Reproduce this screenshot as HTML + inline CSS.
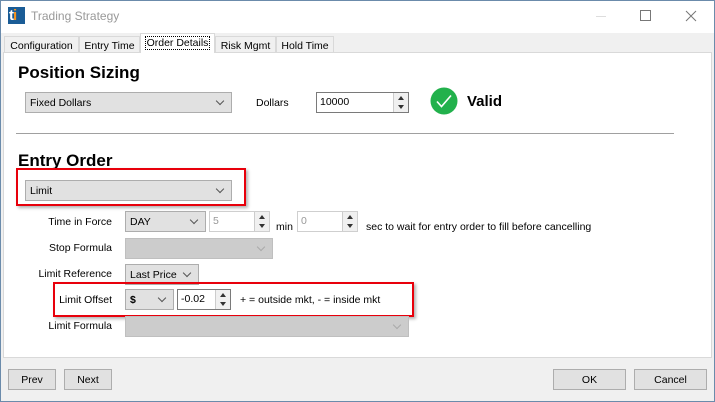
<!DOCTYPE html><html><head><style>
*{box-sizing:border-box;margin:0;padding:0}
body{width:715px;height:402px;overflow:hidden;background:#f0f0f0;font-family:"Liberation Sans",sans-serif;font-size:10.5px;color:#000;position:relative}
.a{position:absolute}
.win{left:0;top:0;width:715px;height:402px;border:1px solid #6b8bab}
.combo{position:absolute;background:#e1e1e1;border:1px solid #adadad;padding:4px 0 0 4px;font-size:10.5px}
.combo:after{content:"";position:absolute;right:8px;top:5px;width:5px;height:5px;border-right:1px solid #555;border-bottom:1px solid #555;transform:rotate(45deg)}
.dis{background:#cccccc;border-color:#bfbfbf}
.dis:after{border-color:#aaa}
.spin{position:absolute;background:#fff;border:1px solid #7a7a7a;padding:3px 0 0 3px;font-size:10.5px}
.spin.d{border-color:#cfcfcf;color:#999}
.spin i{position:absolute;right:0;top:0;width:15px;height:100%;border-left:1px solid #ccc;background:#f0f0f0}
.spin i:before{content:"";position:absolute;left:4px;top:3px;border:3px solid transparent;border-bottom:4px solid #333;border-top:0}
.spin i:after{content:"";position:absolute;left:4px;bottom:3px;border:3px solid transparent;border-top:4px solid #333;border-bottom:0}
.lbl{position:absolute;text-align:right;width:112px;left:0}
.tab{position:absolute;top:36px;height:17px;border:1px solid #d9d9d9;background:#f0f0f0;padding:3px 0 0 0;text-align:center;font-size:10.5px;white-space:nowrap}
.btn{position:absolute;top:369px;height:21px;background:#e1e1e1;border:1px solid #adadad;text-align:center;padding-top:4px;font-size:10.5px}
.red{position:absolute;border:2px solid #e8000b;box-shadow:2px 2px 3px rgba(0,0,0,.3)}
h1{position:absolute;font-size:17px;font-weight:bold;left:18px}
</style></head><body>
<div class="a" style="left:0;top:0;width:715px;height:33px;background:#fff"></div>
<div class="a" style="left:8px;top:7px;width:17px;height:17px;background:#1a5c96;color:#fff;font-weight:bold;font-size:15px;line-height:17px;padding-left:1px;letter-spacing:-1px">t<span style="color:#f7941d">i</span></div>
<div class="a" style="left:31px;top:9px;font-size:12px;color:#999">Trading Strategy</div>
<div class="a" style="left:596px;top:16px;width:10px;height:1px;background:#ddd"></div>
<div class="a" style="left:640px;top:10px;width:11px;height:11px;border:1px solid #777"></div>
<svg class="a" style="left:685px;top:10px" width="12" height="12"><path d="M1 1L11 11M11 1L1 11" stroke="#777" stroke-width="1"/></svg>
<div class="a" style="left:3px;top:52px;width:709px;height:306px;background:#fff;border:1px solid #d9d9d9"></div>
<div class="tab" style="left:4px;width:75px">Configuration</div>
<div class="tab" style="left:79px;width:61px">Entry Time</div>
<div class="tab" style="left:140px;top:33px;height:20px;width:75px;background:#fff;border-bottom:none"><span style="border:1px dotted #000;padding:0 1px">Order Details</span></div>
<div class="tab" style="left:215px;width:61px">Risk Mgmt</div>
<div class="tab" style="left:276px;width:58px">Hold Time</div>
<h1 style="top:63px">Position Sizing</h1>
<div class="combo" style="left:25px;top:92px;width:207px;height:21px">Fixed Dollars</div>
<div class="a" style="left:256px;top:97px">Dollars</div>
<div class="spin" style="left:316px;top:92px;width:93px;height:21px">10000<i></i></div>
<svg class="a" style="left:430px;top:87px" width="28" height="28"><circle cx="14" cy="14" r="13.5" fill="#22b14c"/><path d="M7 14.5l4.5 5 9.5-11" stroke="#fff" stroke-width="1.6" fill="none"/></svg>
<div class="a" style="left:467px;top:93px;font-size:15px;font-weight:bold">Valid</div>
<div class="a" style="left:16px;top:133px;width:658px;height:1px;background:#a0a0a0"></div>
<h1 style="top:151px">Entry Order</h1>
<div class="red" style="left:16px;top:168px;width:230px;height:38px"></div>
<div class="combo" style="left:25px;top:180px;width:207px;height:21px">Limit</div>
<div class="lbl" style="top:216px">Time in Force</div>
<div class="combo" style="left:125px;top:211px;width:81px;height:21px">DAY</div>
<div class="spin d" style="left:209px;top:211px;width:61px;height:21px">5<i></i></div>
<div class="a" style="left:276px;top:221px">min</div>
<div class="spin d" style="left:297px;top:211px;width:61px;height:21px">0<i></i></div>
<div class="a" style="left:366px;top:221px">sec to wait for entry order to fill before cancelling</div>
<div class="lbl" style="top:242px">Stop Formula</div>
<div class="combo dis" style="left:125px;top:238px;width:148px;height:21px"></div>
<div class="lbl" style="top:268px">Limit Reference</div>
<div class="combo" style="left:125px;top:264px;width:74px;height:21px">Last Price</div>
<div class="red" style="left:53px;top:282px;width:361px;height:35px"></div>
<div class="lbl" style="top:294px">Limit Offset</div>
<div class="combo" style="left:125px;top:289px;width:49px;height:21px;font-weight:bold">$</div>
<div class="spin" style="left:177px;top:289px;width:54px;height:21px">-0.02<i></i></div>
<div class="a" style="left:240px;top:294px">+ = outside mkt, - = inside mkt</div>
<div class="lbl" style="top:320px">Limit Formula</div>
<div class="combo dis" style="left:125px;top:316px;width:284px;height:21px"></div>
<div class="btn" style="left:8px;width:48px">Prev</div>
<div class="btn" style="left:64px;width:48px">Next</div>
<div class="btn" style="left:553px;width:73px">OK</div>
<div class="btn" style="left:634px;width:73px">Cancel</div>
<div class="a win"></div>
</body></html>
